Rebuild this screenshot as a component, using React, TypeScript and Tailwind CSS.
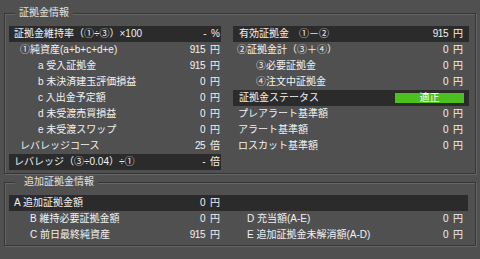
import React from "react";

const FONT = { fontFamily: '"Liberation Sans", "Noto Sans CJK JP", sans-serif' };

function Val({ v, u }: { v: string; u: string }) {
  return (
    <span className="flex items-center whitespace-nowrap">
      <span className="tracking-[-0.5px]">{v}</span>
      <span className="ml-[5px]">{u}</span>
    </span>
  );
}

function Row({
  label,
  v,
  u,
  pl,
  pr,
  dark,
  children,
}: {
  label?: string;
  v?: string;
  u?: string;
  pl: string;
  pr: string;
  dark?: boolean;
  children?: React.ReactNode;
}) {
  return (
    <div
      className={`h-[16px] flex items-center justify-between whitespace-nowrap ${pl} ${pr} ${
        dark ? "bg-[#2b2b2b]" : ""
      }`}
    >
      <span>{label}</span>
      {children ?? (v !== undefined ? <Val v={v} u={u ?? ""} /> : null)}
    </div>
  );
}

function Frame({
  title,
  titleClass,
  h,
  children,
}: {
  title: string;
  titleClass: string;
  h: string;
  children: React.ReactNode;
}) {
  return (
    <div
      className={`relative w-[472px] ${h} border border-[#363636] shadow-[inset_1px_1px_0_#666666,1px_1px_0_#666666] pt-[12px] pl-[4px] pr-[6px]`}
    >
      <span
        className={`absolute top-[-8px] left-[10px] h-[14px] leading-[14px] bg-[#505050] pr-[4px] text-[#e2e2e2] ${titleClass}`}
      >
        {title}
      </span>
      {children}
    </div>
  );
}

export default function App() {
  return (
    <div
      className="w-[480px] h-[259px] bg-[#505050] pt-[13px] pl-[4px] text-[10px] leading-[16px] text-[#f2f2f2]"
      style={FONT}
    >
      <Frame title="証拠金情報" titleClass="pl-[4px]" h="h-[161px]">
        <div className="grid grid-cols-[212px_236px] gap-x-[12px]">
          <div className="flex flex-col">
            <Row dark pl="pl-[5px]" pr="pr-[1px]" label="証拠金維持率（①÷③）×100" v="-" u="%" />
            <Row pl="pl-[11px]" pr="pr-[1px]" label="①純資産(a+b+c+d+e)" v="915" u="円" />
            <Row pl="pl-[29px]" pr="pr-[1px]" label="a 受入証拠金" v="915" u="円" />
            <Row pl="pl-[29px]" pr="pr-[1px]" label="b 未決済建玉評価損益" v="0" u="円" />
            <Row pl="pl-[29px]" pr="pr-[1px]" label="c 入出金予定額" v="0" u="円" />
            <Row pl="pl-[29px]" pr="pr-[1px]" label="d 未受渡売買損益" v="0" u="円" />
            <Row pl="pl-[29px]" pr="pr-[1px]" label="e 未受渡スワップ" v="0" u="円" />
            <Row pl="pl-[11px]" pr="pr-[1px]" label="レバレッジコース" v="25" u="倍" />
            <Row dark pl="pl-[5px]" pr="pr-[1px]" label="レバレッジ（③÷0.04）÷①" v="-" u="倍" />
          </div>
          <div className="flex flex-col">
            <Row dark pl="pl-[6px]" pr="pr-[6px]" label="有効証拠金　①－②" v="915" u="円" />
            <Row pl="pl-[4px]" pr="pr-[6px]" label="②証拠金計（③＋④）" v="0" u="円" />
            <Row pl="pl-[23px]" pr="pr-[6px]" label="③必要証拠金" v="0" u="円" />
            <Row pl="pl-[23px]" pr="pr-[6px]" label="④注文中証拠金" v="0" u="円" />
            <Row dark pl="pl-[6px]" pr="pr-[5px]" label="証拠金ステータス">
              <span className="w-[69px] h-[10px] bg-[#4cc01e] text-white text-center leading-[10px]">
                適正
              </span>
            </Row>
            <Row pl="pl-[5px]" pr="pr-[6px]" label="プレアラート基準額" v="0" u="円" />
            <Row pl="pl-[5px]" pr="pr-[6px]" label="アラート基準額" v="0" u="円" />
            <Row pl="pl-[5px]" pr="pr-[6px]" label="ロスカット基準額" v="0" u="円" />
          </div>
        </div>
      </Frame>
      <div className="mt-[8px]">
        <Frame title="追加証拠金情報" titleClass="pl-[9px]" h="h-[64px]">
          <div className="bg-[#2b2b2b] w-[459px] h-[16px] grid grid-cols-[212px_1fr]">
            <Row pl="pl-[5px]" pr="pr-[1px]" label="A 追加証拠金額" v="0" u="円" />
          </div>
          <div className="grid grid-cols-[212px_236px] gap-x-[12px]">
            <div className="flex flex-col">
              <Row pl="pl-[21px]" pr="pr-[1px]" label="B 維持必要証拠金額" v="0" u="円" />
              <Row pl="pl-[21px]" pr="pr-[1px]" label="C 前日最終純資産" v="915" u="円" />
            </div>
            <div className="flex flex-col">
              <Row pl="pl-[14px]" pr="pr-[6px]" label="D 充当額(A-E)" v="0" u="円" />
              <Row pl="pl-[14px]" pr="pr-[6px]" label="E 追加証拠金未解消額(A-D)" v="0" u="円" />
            </div>
          </div>
        </Frame>
      </div>
    </div>
  );
}
